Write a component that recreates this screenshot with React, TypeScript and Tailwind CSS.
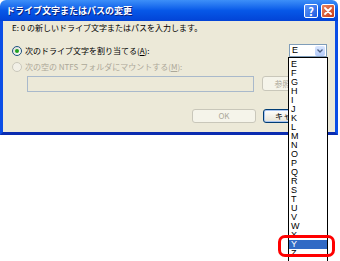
import { Fragment } from 'react'

const letters = 'EFGHIJKLMNOPQRSTUVWXYZ'.split('')

function Radio({ checked, disabled }: { checked?: boolean; disabled?: boolean }) {
  return (
    <span
      className={`flex h-[10px] w-[10px] shrink-0 items-center justify-center rounded-full border ${
        disabled ? 'border-[#CAC8BB] bg-[#F2F0E7]' : 'border-[#1C5180] bg-gradient-to-br from-[#DCDBD5] to-white'
      }`}
    >
      {checked && <span className="h-[4px] w-[4px] rounded-full bg-[#21A121]" />}
    </span>
  )
}

function Mnemonic({ text, letter }: { text: string; letter: string }) {
  return (
    <Fragment>
      {text}(<span className="underline underline-offset-1">{letter}</span>)
    </Fragment>
  )
}

export default function App() {
  return (
    <div
      className="relative h-[261px] w-[340px] overflow-hidden bg-white text-[8px] text-black"
      style={{ fontFamily: '"Noto Sans CJK JP", "Liberation Sans", sans-serif' }}
    >
      {/* dialog */}
      <div className="flex w-[338px] flex-col">
        {/* title bar */}
        <div className="flex h-[21px] items-center rounded-t-[6px] bg-gradient-to-b from-[#3D8FF8] via-[#0758E8] to-[#0343D6] pl-[6px] pr-[3px]">
          <span className="text-[9px] font-bold text-white [text-shadow:1px_1px_0_#0A1E7A]">
            ドライブ文字またはパスの変更
          </span>
          <div className="ml-auto flex gap-[3px] pt-[1px]">
            <div className="flex h-[14px] w-[14px] items-center justify-center rounded-[2px] border border-white bg-gradient-to-br from-[#5C94F8] to-[#1D5BE0] text-[11px] font-bold leading-none text-white">
              ?
            </div>
            <div className="flex h-[14px] w-[14px] items-center justify-center rounded-[2px] border border-white bg-gradient-to-br from-[#E8825E] to-[#C83A16]">
              <svg width="8" height="8" viewBox="0 0 8 8">
                <path d="M1 1 L7 7 M7 1 L1 7" stroke="white" strokeWidth="1.8" strokeLinecap="round" />
              </svg>
            </div>
          </div>
        </div>

        {/* body */}
        <div className="flex h-[114px] flex-col border-x-[3px] border-b-[3px] border-x-[#0B4EE6] border-b-[#0A2CB0] bg-[#ECE9D8] pl-[9px] pr-[8px]">
          <div className="mt-[1px] h-[12px] leading-[12px]">E: 0 の新しいドライブ文字またはパスを入力します。</div>

          <div className="mt-[10px] flex h-[13px] items-center">
            <Radio checked />
            <span className="ml-[3px] leading-[12px]">
              <Mnemonic text="次のドライブ文字を割り当てる" letter="A" />:
            </span>
            <div className="ml-auto flex h-[13px] w-[38px] items-center border border-[#7F9DB9] bg-white pl-[2px]">
              <span className="text-[9px] leading-none" style={{ fontFamily: '"Liberation Sans", sans-serif' }}>
                E
              </span>
              <div className="ml-auto mr-[1px] flex h-[10px] w-[10px] items-center justify-center rounded-[2px] bg-gradient-to-b from-[#D9E6FE] to-[#B4CBF9]">
                <svg width="6" height="4" viewBox="0 0 6 4">
                  <path d="M0.5 0.5 L3 3 L5.5 0.5" stroke="#4D6185" strokeWidth="1.3" fill="none" />
                </svg>
              </div>
            </div>
          </div>

          <div className="mt-[4px] flex h-[12px] items-center text-[#ACA899]">
            <Radio disabled />
            <span className="ml-[3px] leading-[12px]">
              次の空の NTFS フォルダにマウントする(<span className="underline underline-offset-1">M</span>):
            </span>
          </div>

          <div className="mt-[3px] flex h-[16px] gap-[8px] pl-[15px]">
            <div className="h-[16px] w-[227px] border border-[#A9B9CB] bg-[#ECE9D8]" />
            <div className="flex h-[15px] w-[58px] items-center justify-center rounded-[3px] border border-[#C9C7BA] bg-[#F5F4EA] text-[#ACA899]">
              <Mnemonic text="参照" letter="R" />...
            </div>
          </div>

          <div className="mt-[17px] flex justify-end gap-[7px]">
            <div className="flex h-[14px] w-[64px] items-center justify-center rounded-[3px] border border-[#C9C7BA] bg-[#F5F4EA] text-[#ACA899]">
              OK
            </div>
            <div className="flex h-[14px] w-[64px] items-center justify-center rounded-[3px] border border-[#003C74] bg-gradient-to-b from-white to-[#E6E3D6] shadow-[inset_0_0_0_1px_#A8C4F0]">
              キャンセル
            </div>
          </div>
        </div>
      </div>

      {/* open drop-down list */}
      <div className="absolute left-[288px] top-[57px] w-[40px] border border-black bg-white pb-[6px] pt-[2px]">
        {letters.map((l) => (
          <div
            key={l}
            className={`h-[9px] pl-[2px] text-[9px] leading-[9px] ${l === 'Y' ? 'bg-[#316AC5] text-white' : ''}`}
            style={{ fontFamily: '"Liberation Sans", sans-serif' }}
          >
            {l}
          </div>
        ))}
      </div>

      {/* red highlight */}
      <div className="absolute left-[278px] top-[235px] h-[22px] w-[57px] rounded-[7px] border-[3px] border-[#FF0000]" />
    </div>
  )
}
